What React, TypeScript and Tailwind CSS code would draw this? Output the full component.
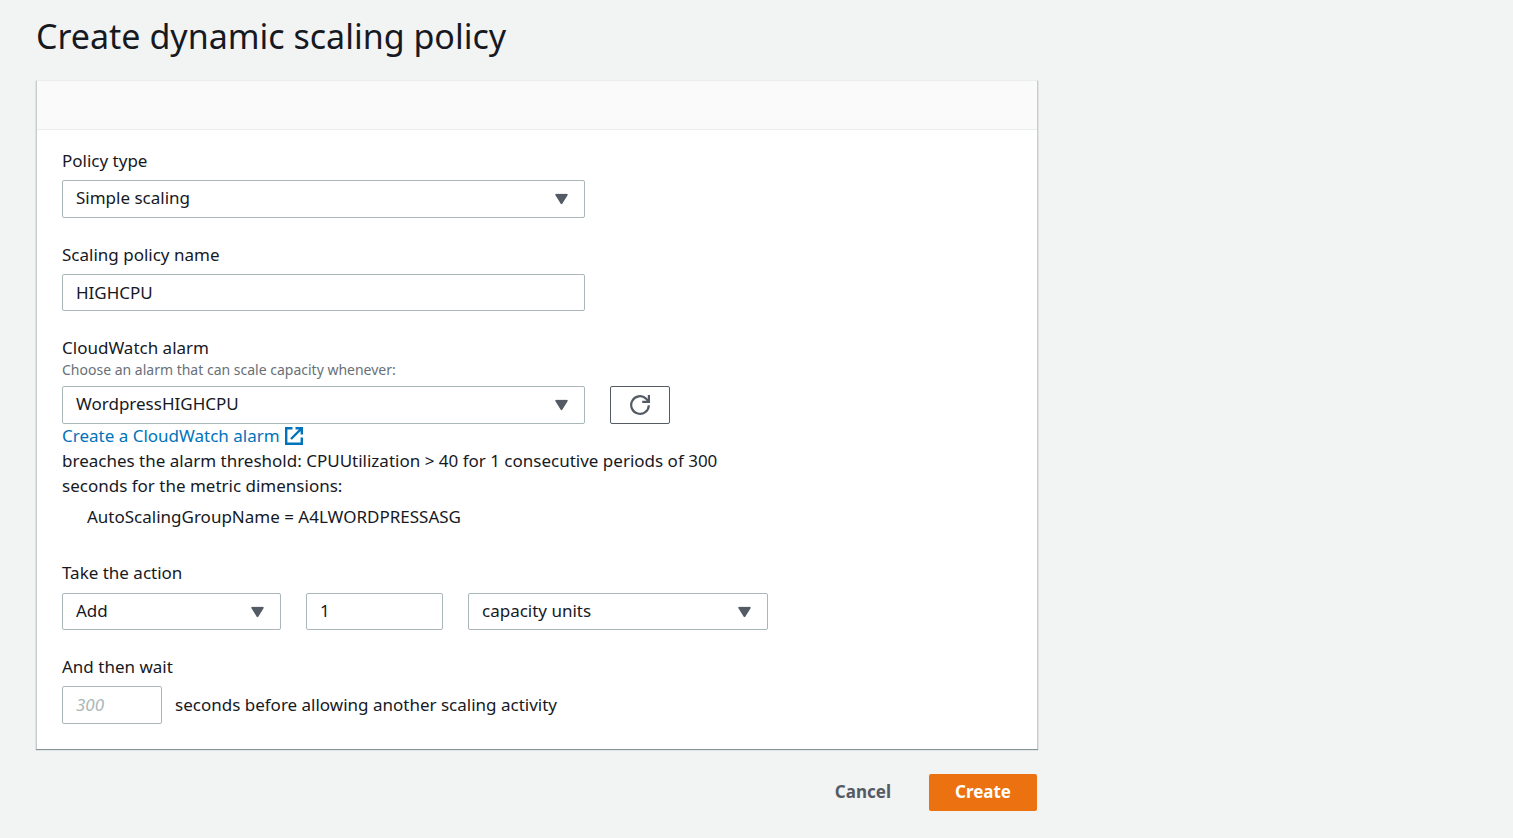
import { useState } from "react";
import type { ReactNode, SelectHTMLAttributes } from "react";

const fieldClass =
  "w-full rounded-[2px] border border-[#aab7b8] bg-white px-[13px] text-[17px] leading-6 text-[#16191f] outline-none focus:border-[#00a1c9]";

const labelClass = "block text-[17px] leading-6";

function Select({ children, ...props }: SelectHTMLAttributes<HTMLSelectElement> & { children: ReactNode }) {
  return (
    <div className="relative">
      <select {...props} className={`${fieldClass} block appearance-none pr-10 pb-0.5 ${props.className ?? ""}`}>
        {children}
      </select>
      <svg
        className="pointer-events-none absolute top-1/2 right-[17px] -translate-y-1/2"
        width="13"
        height="11"
        viewBox="0 0 13 11"
        aria-hidden="true"
      >
        <path d="M1.2 1.2h10.6L6.5 9.8z" fill="#545b64" stroke="#545b64" strokeWidth="1.8" strokeLinejoin="round" />
      </svg>
    </div>
  );
}

function RefreshIcon() {
  return (
    <svg width="20" height="20" viewBox="0 0 20 20" fill="none" stroke="#545b64" strokeWidth="2.2" aria-hidden="true">
      <path d="M18.8 10.2A8.8 8.8 0 1 1 16 3.6l2.4 2.6" />
      <path d="M18.9 0v6.9h-6.7" />
    </svg>
  );
}

function ExternalIcon() {
  return (
    <svg width="18" height="18" viewBox="0 0 18 18" fill="none" stroke="#0073bb" strokeWidth="2.4" aria-hidden="true">
      <path d="M7.5 1.2H1.2v15.6h15.6v-6.3" />
      <path d="M10.5 1.2h6.3v6.3M16.5 1.5L6 12" />
    </svg>
  );
}

export default function App() {
  const [policyType, setPolicyType] = useState("Simple scaling");
  const [name, setName] = useState("HIGHCPU");
  const [amount, setAmount] = useState("1");

  return (
    <main className="min-h-screen bg-[#f2f3f3] px-9 pt-3 pb-7 font-['Noto_Sans',sans-serif] text-[17px] text-[#16191f]">
      <form className="max-w-[1002px]" onSubmit={(e) => e.preventDefault()}>
        <h1 className="text-[34px] leading-12">Create dynamic scaling policy</h1>

        <section className="mt-5 border-x border-t border-x-[#c5cdcd] border-t-[#eaeded] bg-white shadow-[0_1px_1px_0_#879596]">
          <div className="h-12 bg-[#fafafa]" />
          <div className="flex flex-col gap-[25px] border-t border-[#eaeded] px-[25px] pt-[19px] pb-[25px]">
            <div className="flex max-w-[523px] flex-col gap-[7px]">
              <label htmlFor="policy-type" className={labelClass}>Policy type</label>
              <Select
                id="policy-type"
                className="h-[38px]"
                value={policyType}
                onChange={(e) => setPolicyType(e.target.value)}
              >
                <option>Simple scaling</option>
                <option>Step scaling</option>
                <option>Target tracking scaling</option>
              </Select>
            </div>

            <div className="flex max-w-[523px] flex-col gap-[7px]">
              <label htmlFor="policy-name" className={labelClass}>Scaling policy name</label>
              <input
                id="policy-name"
                className={`${fieldClass} h-[37px]`}
                value={name}
                onChange={(e) => setName(e.target.value)}
              />
            </div>

            <div className="pb-[7px]">
              <label htmlFor="alarm" className={labelClass}>CloudWatch alarm</label>
              <p id="alarm-hint" className="text-[14px] leading-[19px] text-[#687078]">
                Choose an alarm that can scale capacity whenever:
              </p>
              <div className="mt-[7px] flex gap-[25px]">
                <div className="w-full max-w-[523px]">
                  <Select id="alarm" aria-describedby="alarm-hint" className="h-[38px]" defaultValue="WordpressHIGHCPU">
                    <option>WordpressHIGHCPU</option>
                  </Select>
                </div>
                <button
                  type="button"
                  aria-label="Refresh alarms"
                  className="flex h-[38px] w-[60px] shrink-0 items-center justify-center rounded-[2px] border border-[#545b64] bg-white"
                >
                  <RefreshIcon />
                </button>
              </div>
              <a href="#alarm" className="flex w-fit items-center gap-[5px] leading-6 text-[#0073bb]">
                Create a CloudWatch alarm
                <ExternalIcon />
              </a>
              <p className="max-w-[680px] leading-[25px]">
                breaches the alarm threshold: CPUUtilization &gt; 40 for 1 consecutive periods of 300 seconds for the
                metric dimensions:
              </p>
              <p className="mt-1.5 pl-[25px] leading-[25px]">AutoScalingGroupName = A4LWORDPRESSASG</p>
            </div>

            <fieldset>
              <legend className={labelClass}>Take the action</legend>
              <div className="mt-2 flex gap-[25px]">
                <div className="w-[219px]">
                  <Select aria-label="Action" className="h-[37px]" defaultValue="Add">
                    <option>Add</option>
                    <option>Remove</option>
                    <option>Set to</option>
                  </Select>
                </div>
                <div className="w-[137px]">
                  <input
                    aria-label="Amount"
                    className={`${fieldClass} block h-[37px] pb-0.5`}
                    value={amount}
                    onChange={(e) => setAmount(e.target.value)}
                  />
                </div>
                <div className="w-[300px]">
                  <Select aria-label="Unit" className="h-[37px]" defaultValue="capacity units">
                    <option>capacity units</option>
                    <option>percent of group</option>
                  </Select>
                </div>
              </div>
            </fieldset>

            <div className="flex flex-col gap-[7px]">
              <label htmlFor="wait" className={labelClass}>And then wait</label>
              <div className="flex items-center gap-[13px]">
                <div className="w-[100px]">
                  <input
                    id="wait"
                    placeholder="300"
                    className={`${fieldClass} block h-[38px] pb-0.5 placeholder:text-[#aab7b8] placeholder:italic`}
                  />
                </div>
                <span>seconds before allowing another scaling activity</span>
              </div>
            </div>
          </div>
        </section>

        <div className="mt-[25px] flex justify-end gap-3 pr-px font-bold">
          <button type="button" className="h-[37px] px-[26px] pb-0.5 text-[#545b64]">Cancel</button>
          <button type="submit" className="h-[37px] w-[108px] rounded-[2px] bg-[#ec7211] pb-0.5 text-white">Create</button>
        </div>
      </form>
    </main>
  );
}
